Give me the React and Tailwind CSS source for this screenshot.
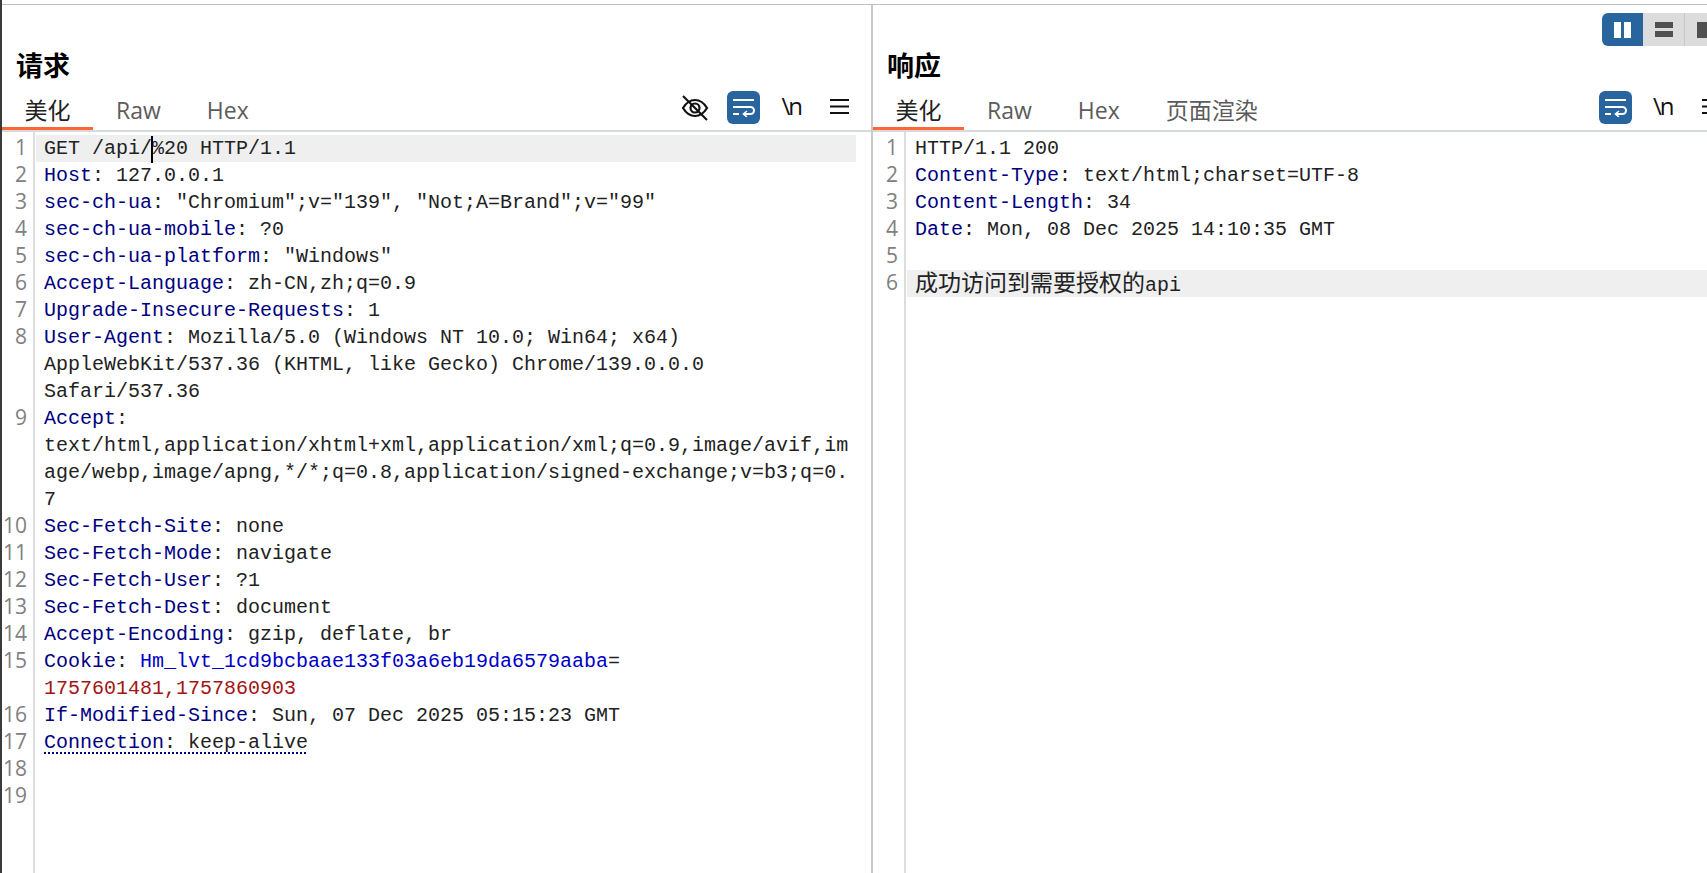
const K = "text-[#000080]";
const V = "text-[#222222]";
const C = "text-[#0000c8]";
const R = "text-[#a31515]";

const requestLines = [
  { n: 1, hl: true, caret: true, parts: [["GET /api/", V]], after: "%20 HTTP/1.1" },
  { n: 2, parts: [["Host", K], [": 127.0.0.1", V]] },
  { n: 3, parts: [["sec-ch-ua", K], [': "Chromium";v="139", "Not;A=Brand";v="99"', V]] },
  { n: 4, parts: [["sec-ch-ua-mobile", K], [": ?0", V]] },
  { n: 5, parts: [["sec-ch-ua-platform", K], [': "Windows"', V]] },
  { n: 6, parts: [["Accept-Language", K], [": zh-CN,zh;q=0.9", V]] },
  { n: 7, parts: [["Upgrade-Insecure-Requests", K], [": 1", V]] },
  { n: 8, parts: [["User-Agent", K], [": Mozilla/5.0 (Windows NT 10.0; Win64; x64)", V]] },
  { parts: [["AppleWebKit/537.36 (KHTML, like Gecko) Chrome/139.0.0.0", V]] },
  { parts: [["Safari/537.36", V]] },
  { n: 9, parts: [["Accept", K], [":", V]] },
  { parts: [["text/html,application/xhtml+xml,application/xml;q=0.9,image/avif,im", V]] },
  { parts: [["age/webp,image/apng,*/*;q=0.8,application/signed-exchange;v=b3;q=0.", V]] },
  { parts: [["7", V]] },
  { n: 10, parts: [["Sec-Fetch-Site", K], [": none", V]] },
  { n: 11, parts: [["Sec-Fetch-Mode", K], [": navigate", V]] },
  { n: 12, parts: [["Sec-Fetch-User", K], [": ?1", V]] },
  { n: 13, parts: [["Sec-Fetch-Dest", K], [": document", V]] },
  { n: 14, parts: [["Accept-Encoding", K], [": gzip, deflate, br", V]] },
  { n: 15, parts: [["Cookie", K], [": ", V], ["Hm_lvt_1cd9bcbaae133f03a6eb19da6579aaba", C], ["=", V]] },
  { parts: [["1757601481,1757860903", R]] },
  { n: 16, parts: [["If-Modified-Since", K], [": Sun, 07 Dec 2025 05:15:23 GMT", V]] },
  { n: 17, dotted: true, parts: [["Connection", K], [": keep-alive", V]] },
  { n: 18, parts: [] },
  { n: 19, parts: [] },
];

const responseLines = [
  { n: 1, parts: [["HTTP/1.1 200", V]] },
  { n: 2, parts: [["Content-Type", K], [": text/html;charset=UTF-8", V]] },
  { n: 3, parts: [["Content-Length", K], [": 34", V]] },
  { n: 4, parts: [["Date", K], [": Mon, 08 Dec 2025 14:10:35 GMT", V]] },
  { n: 5, parts: [] },
  { n: 6, hl: true, cjk: "成功访问到需要授权的", parts: [["api", V]] },
];

function WrapButton() {
  return (
    <div className="flex h-[33px] w-[33px] shrink-0 items-center justify-center rounded-[6px] bg-[#28659f]">
      <svg width="23" height="19" viewBox="0 0 23 19" fill="none" stroke="white" strokeWidth="2">
        <path d="M1 2h21" />
        <path d="M1 9h17.5a3.5 3.5 0 0 1 0 7H12" />
        <path d="M1 16h6" />
        <path d="M15 13l-3.5 3 3.5 3" strokeWidth="1.6" />
      </svg>
    </div>
  );
}

function EyeOff() {
  return (
    <svg width="28" height="28" viewBox="0 0 28 28" fill="none" stroke="#111" strokeWidth="2.2">
      <path d="M2 14c3-5 7-8 12-8s9 3 12 8c-3 5-7 8-12 8s-9-3-12-8z" />
      <circle cx="14" cy="14" r="4.5" />
      <path d="M2 2l24 24" />
    </svg>
  );
}

function Menu() {
  return (
    <svg width="19" height="17" viewBox="0 0 19 17" fill="none" stroke="#111" strokeWidth="2.2">
      <path d="M0 2h19M0 8.5h19M0 15h19" />
    </svg>
  );
}

function Tabs({ items }) {
  return (
    <div className="flex items-end text-[23px] leading-[38px] text-[#5c5c5c] font-['Open_Sans','Noto_Sans_CJK_SC',sans-serif]">
      {items.map((t, i) => (
        <div
          key={t}
          className={
            i === 0
              ? "flex h-[39px] w-[91px] justify-center border-b-[3px] border-[#ff6633] text-[#222222]"
              : "flex h-[39px] justify-center px-[23px]"
          }
        >
          {t}
        </div>
      ))}
    </div>
  );
}

function Code({ lines, hlWidth }) {
  return (
    <div className="flex flex-1 flex-col font-['Liberation_Mono','Noto_Sans_CJK_SC',monospace] text-[20px] leading-[27px]">
      <div className="h-[3px] w-[33px] border-r-2 border-[#dddddd]" />
      {lines.map((l, i) => (
        <div key={i} className="flex h-[27px]">
          <div className="w-[33px] shrink-0 border-r-2 border-[#dddddd] pr-[6px] text-right font-['Open_Sans',sans-serif] text-[21px] leading-[25px] text-[#808080]">
            {l.n}
          </div>
          <div className={`${hlWidth} ml-[1px] whitespace-pre pl-[8px] ${l.hl ? "bg-[#efefef]" : ""}`}>
            <span className={l.dotted ? "underline decoration-dotted decoration-2 decoration-[#000080] underline-offset-[4px]" : ""}>
              {l.cjk && <span className="font-['Noto_Sans_CJK_SC',sans-serif] text-[23px] leading-none text-[#222222]">{l.cjk}</span>}
              {l.parts.map(([t, c], j) => (
                <span key={j} className={c}>{t}</span>
              ))}
              {l.caret && (
                <span className="relative">
                  <span className="absolute left-[-1px] top-[-1px] h-[27px] w-[2px] bg-black" />
                </span>
              )}
              {l.after && <span className={V}>{l.after}</span>}
            </span>
          </div>
        </div>
      ))}
      <div className="w-[33px] flex-1 border-r-2 border-[#dddddd]" />
    </div>
  );
}

function PanelHeader({ title, tabs, children }) {
  return (
    <div className="flex h-[127px] shrink-0 flex-col border-b-2 border-[#d6dada]">
      <div className="pl-[14px] pt-[43px] font-['Noto_Sans_CJK_SC',sans-serif] text-[27px] font-bold leading-[34px] text-black">
        {title}
      </div>
      <div className="mt-[9px] flex items-start justify-between">
        <Tabs items={tabs} />
        <div className="flex items-center">{children}</div>
      </div>
    </div>
  );
}

function Slash() {
  return <span className="block font-['Open_Sans',sans-serif] text-[24px] leading-[28px] tracking-[-2px] text-[#111111]">\n</span>;
}

export default function App() {
  return (
    <div className="relative flex h-[873px] w-[1707px] overflow-hidden bg-white">
      <div className="w-[2px] shrink-0 bg-[#3a3a3a]" />
      <div className="flex min-w-0 flex-1 flex-col">
        <div className="h-[5px] shrink-0 border-b border-[#c4bec0]" />
        <div className="flex min-h-0 flex-1">
          <div className="flex w-[871px] shrink-0 flex-col border-r-2 border-[#c9c9c9]">
            <PanelHeader title="请求" tabs={["美化", "Raw", "Hex"]}>
              <div className="flex items-center pr-[22px]">
                <EyeOff />
                <div className="ml-[18px]"><WrapButton /></div>
                <div className="mb-[4px] ml-[21px]"><Slash /></div>
                <div className="mb-[3px] ml-[29px]"><Menu /></div>
              </div>
            </PanelHeader>
            <Code lines={requestLines} hlWidth="w-[820px]" />
          </div>
          <div className="flex min-w-0 flex-1 flex-col overflow-hidden">
            <PanelHeader title="响应" tabs={["美化", "Raw", "Hex", "页面渲染"]}>
              <div className="flex w-[108px] shrink-0 items-center overflow-hidden">
                <WrapButton />
                <div className="mb-[4px] ml-[21px]"><Slash /></div>
                <div className="mb-[3px] ml-[29px] shrink-0"><Menu /></div>
              </div>
            </PanelHeader>
            <Code lines={responseLines} hlWidth="flex-1" />
          </div>
        </div>
      </div>
      <div className="absolute left-[1602px] top-[13px] flex h-[33px] w-[105px]">
        <div className="flex w-[41px] items-center justify-center rounded-l-[6px] bg-[#28659f]">
          <div className="flex gap-[3px]">
            <div className="h-[16px] w-[7px] bg-white" />
            <div className="h-[16px] w-[7px] bg-white" />
          </div>
        </div>
        <div className="flex w-[42px] flex-col items-center justify-center gap-[3px] border-r border-[#c8c8c8] bg-[#dcdcdc]">
          <div className="h-[6px] w-[18px] bg-[#505050]" />
          <div className="h-[6px] w-[18px] bg-[#505050]" />
        </div>
        <div className="flex flex-1 items-center bg-[#dcdcdc] pl-[12px]">
          <div className="h-[16px] w-[10px] bg-[#505050]" />
        </div>
      </div>
    </div>
  );
}
